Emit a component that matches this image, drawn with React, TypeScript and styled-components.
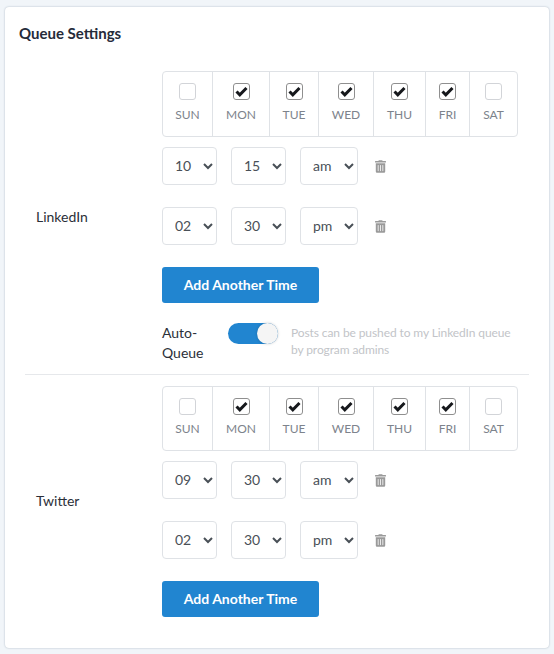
import styled, { createGlobalStyle } from "styled-components";

const GlobalStyle = createGlobalStyle`
  html, body {
    margin: 0;
    padding: 0;
    background: #f1f5f9;
    font-family: "Lato", "Liberation Sans", sans-serif;
  }
  * {
    box-sizing: border-box;
  }
`;

const Page = styled.div`
  width: 554px;
  height: 654px;
  padding: 7px 5px 6px 5px;
`;

const Card = styled.div`
  width: 544px;
  height: 641px;
  padding: 17px 14px 0 14px;
  background: #fff;
  border-radius: 4px;
  box-shadow: 0 0 2px #a9b4c0;
`;

const Title = styled.h2`
  margin: 0 0 29px 0;
  height: 18px;
  font-size: 15px;
  line-height: 18px;
  font-weight: 700;
  color: #252b3a;
`;

const Section = styled.section<{ $divided?: boolean }>`
  display: flex;
  align-items: center;
  margin: 0 6px ${({ $divided }) => ($divided ? "11px" : "0")} 6px;
  padding-bottom: ${({ $divided }) => ($divided ? "11px" : "0")};
  border-bottom: ${({ $divided }) => ($divided ? "1px solid #e6e8eb" : "none")};
`;

const NetworkName = styled.div`
  width: 137px;
  padding: 0 0 2px 11px;
  font-size: 14px;
  color: #2b2f38;
`;

const Content = styled.div`
  display: flex;
  flex-direction: column;
  width: 367px;
`;

const DayGrid = styled.div<{ $compact?: boolean }>`
  display: flex;
  width: 356px;
  height: ${({ $compact }) => ($compact ? "65px" : "66px")};
  border: 1px solid #dfe2e6;
  border-radius: 4px;
  margin-bottom: 10px;
`;

const DayCell = styled.div<{ $width: number }>`
  display: flex;
  flex-direction: column;
  align-items: center;
  width: ${({ $width }) => $width}px;
  padding-top: 11px;
  border-right: 1px solid #dfe2e6;

  &:last-child {
    border-right: none;
  }
`;

const CheckBox = styled.span<{ $checked: boolean }>`
  display: flex;
  align-items: center;
  justify-content: center;
  width: 17px;
  height: 17px;
  border-radius: 3px;
  border: 1px solid ${({ $checked }) => ($checked ? "#8f8f8f" : "#d2d4d8")};
  background: #fff;
`;

const DayName = styled.span<{ $compact?: boolean }>`
  margin-top: ${({ $compact }) => ($compact ? "6px" : "7px")};
  font-size: 12px;
  line-height: 16px;
  color: #7d838c;
`;

const TimeRow = styled.div`
  display: flex;
  align-items: center;
  height: 38px;
  margin-bottom: 22px;
`;

const Select = styled.select<{ $width: number }>`
  width: ${({ $width }) => $width}px;
  height: 38px;
  margin-right: 14px;
  padding: 0 0 2px 8px;
  background: #fff;
  border: 1px solid #dfe2e6;
  border-radius: 4px;
  font-family: "Lato", "Liberation Sans", sans-serif;
  font-size: 14px;
  color: #495057;
`;

const TrashButton = styled.button`
  display: flex;
  align-items: center;
  justify-content: center;
  width: 14px;
  height: 16px;
  margin-left: 1px;
  padding: 0;
  border: none;
  background: transparent;
`;

const AddButton = styled.button`
  width: 157px;
  height: 36px;
  padding: 0 0 2px 0;
  border: none;
  border-radius: 3px;
  background: #2185d0;
  color: #fff;
  font-family: "Lato", "Liberation Sans", sans-serif;
  font-size: 14px;
  font-weight: 700;
`;

const AutoQueueRow = styled.div`
  display: flex;
  align-items: flex-start;
  margin-top: 20px;
`;

const AutoQueueLabel = styled.div`
  width: 66px;
  font-size: 14px;
  line-height: 20px;
  color: #2b2f38;
`;

const Toggle = styled.div`
  position: relative;
  flex: none;
  width: 50px;
  height: 21px;
  border-radius: 11px;
  background: #2185d0;
`;

const ToggleKnob = styled.span`
  position: absolute;
  top: 0;
  right: 0;
  width: 21px;
  height: 21px;
  border-radius: 50%;
  background: #f5f5f5;
  box-shadow: 0 0 3px rgba(0, 0, 0, 0.2);
`;

const AutoQueueHint = styled.div`
  width: 230px;
  margin: 1px 0 0 13px;
  font-size: 12px;
  line-height: 17px;
  font-weight: 400;
  letter-spacing: -0.1px;
  color: #c2c4c8;
`;

const days = [
  { name: "SUN", width: 50, checked: false },
  { name: "MON", width: 57, checked: true },
  { name: "TUE", width: 49, checked: true },
  { name: "WED", width: 55, checked: true },
  { name: "THU", width: 52, checked: true },
  { name: "FRI", width: 44, checked: true },
  { name: "SAT", width: 47, checked: false },
];

const hours = ["01", "02", "03", "04", "05", "06", "07", "08", "09", "10", "11", "12"];
const minutes = ["00", "15", "30", "45"];

const CheckMark = () => (
  <svg width="13" height="11" viewBox="0 0 13 11">
    <path d="M1.500 5.500 L4.800 8.800 L11.500 2" fill="none" stroke="#16181c" strokeWidth="3" />
  </svg>
);

const TrashIcon = () => (
  <svg width="11" height="13" viewBox="0 0 448 512" fill="#9a9a9a">
    <path d="M32 464a48 48 0 0 0 48 48h288a48 48 0 0 0 48-48V128H32zm272-256a16 16 0 0 1 32 0v224a16 16 0 0 1-32 0zm-96 0a16 16 0 0 1 32 0v224a16 16 0 0 1-32 0zm-96 0a16 16 0 0 1 32 0v224a16 16 0 0 1-32 0zM432 32H312l-9.400-18.700A24 24 0 0 0 281.100 0H166.800a23.700 23.700 0 0 0-21.400 13.300L136 32H16A16 16 0 0 0 0 48v32a16 16 0 0 0 16 16h416a16 16 0 0 0 16-16V48a16 16 0 0 0-16-16z" />
  </svg>
);

const DayPicker = ({ compact }: { compact?: boolean }) => (
  <DayGrid $compact={compact}>
    {days.map((day) => (
      <DayCell key={day.name} $width={day.width}>
        <CheckBox $checked={day.checked}>{day.checked && <CheckMark />}</CheckBox>
        <DayName $compact={compact}>{day.name}</DayName>
      </DayCell>
    ))}
  </DayGrid>
);

const TimePicker = ({ hour, minute, period }: { hour: string; minute: string; period: string }) => (
  <TimeRow>
    <Select $width={55} defaultValue={hour}>
      {hours.map((h) => (
        <option key={h}>{h}</option>
      ))}
    </Select>
    <Select $width={55} defaultValue={minute}>
      {minutes.map((m) => (
        <option key={m}>{m}</option>
      ))}
    </Select>
    <Select $width={58} defaultValue={period}>
      <option>am</option>
      <option>pm</option>
    </Select>
    <TrashButton>
      <TrashIcon />
    </TrashButton>
  </TimeRow>
);

const App = () => {
  return (
    <Page>
      <GlobalStyle />
      <Card>
        <Title>Queue Settings</Title>
        <Section $divided>
          <NetworkName>LinkedIn</NetworkName>
          <Content>
            <DayPicker />
            <TimePicker hour="10" minute="15" period="am" />
            <TimePicker hour="02" minute="30" period="pm" />
            <AddButton>Add Another Time</AddButton>
            <AutoQueueRow>
              <AutoQueueLabel>Auto-Queue</AutoQueueLabel>
              <Toggle>
                <ToggleKnob />
              </Toggle>
              <AutoQueueHint>Posts can be pushed to my LinkedIn queue by program admins</AutoQueueHint>
            </AutoQueueRow>
          </Content>
        </Section>
        <Section>
          <NetworkName>Twitter</NetworkName>
          <Content>
            <DayPicker compact />
            <TimePicker hour="09" minute="30" period="am" />
            <TimePicker hour="02" minute="30" period="pm" />
            <AddButton>Add Another Time</AddButton>
          </Content>
        </Section>
      </Card>
    </Page>
  );
};

export default App;
